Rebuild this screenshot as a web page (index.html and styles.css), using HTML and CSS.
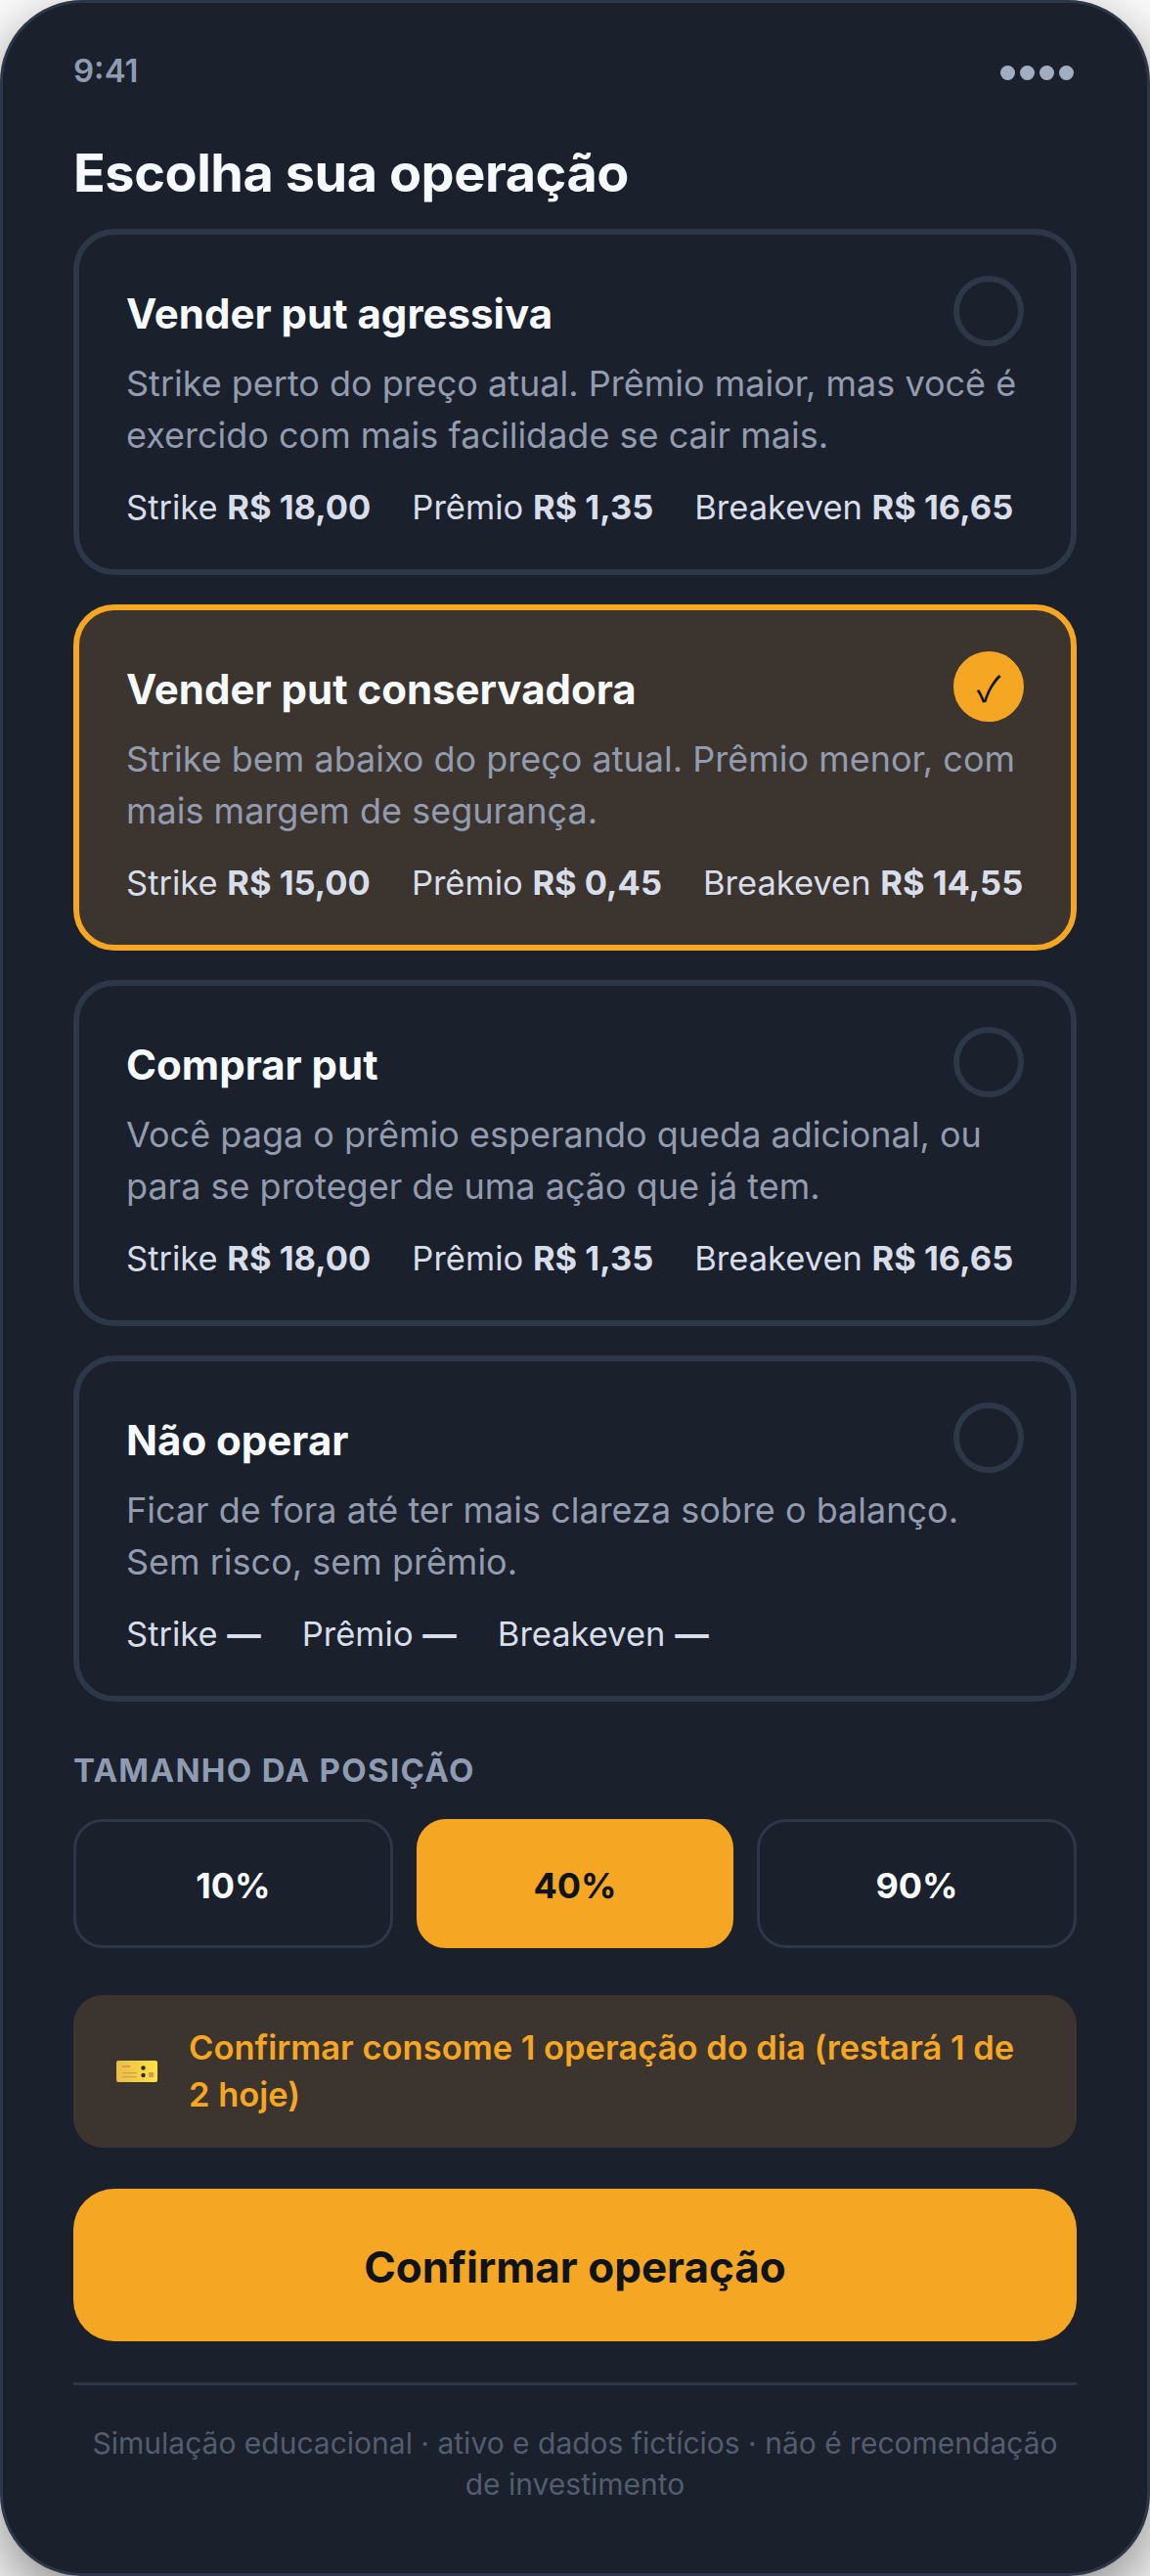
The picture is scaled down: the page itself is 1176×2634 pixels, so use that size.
FILE: index.html
```html
<!DOCTYPE html>
<html lang="pt-BR">
<head>
<meta charset="UTF-8">
<meta name="viewport" content="width=device-width, initial-scale=1.0">
<title>Escolha sua operação</title>
<link rel="stylesheet" href="styles.css">
</head>
<body>
<div class="phone">
    <div class="status-bar">
        <span class="time">9:41</span>
        <div class="dots"><i></i><i></i><i></i><i></i></div>
    </div>
    <h1>Escolha sua operação</h1>

    <div class="cards">
        <div class="card">
            <div class="card-head">
                <h2>Vender put agressiva</h2>
                <div class="radio"></div>
            </div>
            <p class="desc">Strike perto do preço atual. Prêmio maior, mas você é exercido com mais facilidade se cair mais.</p>
            <div class="stats">
                <span>Strike <b>R$ 18,00</b></span>
                <span>Prêmio <b>R$ 1,35</b></span>
                <span>Breakeven <b>R$ 16,65</b></span>
            </div>
        </div>
        <div class="card selected">
            <div class="card-head">
                <h2>Vender put conservadora</h2>
                <div class="radio">✓</div>
            </div>
            <p class="desc">Strike bem abaixo do preço atual. Prêmio menor, com mais margem de segurança.</p>
            <div class="stats">
                <span>Strike <b>R$ 15,00</b></span>
                <span>Prêmio <b>R$ 0,45</b></span>
                <span>Breakeven <b>R$ 14,55</b></span>
            </div>
        </div>
        <div class="card">
            <div class="card-head">
                <h2>Comprar put</h2>
                <div class="radio"></div>
            </div>
            <p class="desc">Você paga o prêmio esperando queda adicional, ou para se proteger de uma ação que já tem.</p>
            <div class="stats">
                <span>Strike <b>R$ 18,00</b></span>
                <span>Prêmio <b>R$ 1,35</b></span>
                <span>Breakeven <b>R$ 16,65</b></span>
            </div>
        </div>
        <div class="card">
            <div class="card-head">
                <h2>Não operar</h2>
                <div class="radio"></div>
            </div>
            <p class="desc">Ficar de fora até ter mais clareza sobre o balanço. Sem risco, sem prêmio.</p>
            <div class="stats">
                <span>Strike <b>—</b></span>
                <span>Prêmio <b>—</b></span>
                <span>Breakeven <b>—</b></span>
            </div>
        </div>
    </div>

    <div class="section-label">TAMANHO DA POSIÇÃO</div>
    <div class="sizes">
        <div class="size">10%</div>
        <div class="size active">40%</div>
        <div class="size">90%</div>
    </div>

    <div class="notice">
        <svg class="ticket" viewBox="0 0 42 22" width="42" height="22">
            <defs>
                <linearGradient id="ticket-fill" x1="0" y1="0" x2="1" y2="0">
                    <stop offset="0" stop-color="#e9bd45"/>
                    <stop offset="1" stop-color="#fde245"/>
                </linearGradient>
            </defs>
            <rect width="42" height="22" rx="2" fill="url(#ticket-fill)"/>
            <rect x="6" y="5" width="8" height="2" fill="#e0945a"/>
            <rect x="6" y="12" width="15" height="1.2" fill="#e0945a"/>
            <rect x="6" y="16" width="15" height="1.2" fill="#e0945a"/>
            <rect x="33" y="12" width="5" height="5" fill="#e0945a"/>
            <circle cx="27.5" cy="7.5" r="2.2" fill="#2a2a2a"/>
            <circle cx="27.5" cy="15" r="2.2" fill="#2a2a2a"/>
        </svg>
        <span>Confirmar consome 1 operação do dia (restará 1 de 2 hoje)</span>
    </div>

    <button class="confirm">Confirmar operação</button>

    <p class="footer">Simulação educacional · ativo e dados fictícios · não é recomendação de investimento</p>
</div>
</body>
</html>
```

FILE: styles.css
```css
* {
    box-sizing: border-box;
}
html, body {
    margin: 0;
    padding: 0;
}
body {
    width: 1176px;
    height: 2634px;
    background: #fff;
    font-family: Inter, "Liberation Sans", sans-serif;
    overflow: hidden;
}
.phone {
    width: 1176px;
    height: 2634px;
    padding: 0 72px;
    background-color: #1a202c;
    border: 3px solid #2d3748;
    border-radius: 84px;
    box-shadow: 0 24px 72px rgba(0,0,0,0.5);
    overflow: hidden;
}
.status-bar {
    display: flex;
    justify-content: space-between;
    align-items: center;
    height: 60px;
    margin-top: 39px;
}
.time {
    font-size: 33px;
    font-weight: 600;
    color: #8f9bb0;
}
.dots {
    display: flex;
    gap: 5px;
    margin-top: 4px;
    padding-right: 3px;
}
.dots i {
    width: 15px;
    height: 15px;
    border-radius: 50%;
    background-color: #a0aec0;
}
h1 {
    margin: 45px 0 0;
    font-size: 54px;
    line-height: 60px;
    letter-spacing: -0.45px;
    font-weight: 700;
    color: #f7fafc;
}
.cards {
    display: flex;
    flex-direction: column;
    gap: 30px;
    margin-top: 27px;
}
.card {
    height: 354px;
    padding: 42px 48px;
    border: 6px solid #2d3748;
    border-radius: 42px;
}
.card.selected {
    background-color: #3c342e;
    border-color: #f5a623;
}
.card-head {
    display: flex;
    justify-content: space-between;
    height: 72px;
}
h2 {
    margin: 14px 0 0;
    font-size: 42px;
    line-height: 50px;
    font-weight: 700;
    color: #f7fafc;
}
.radio {
    width: 72px;
    height: 72px;
    flex-shrink: 0;
    border: 6px solid #2d3748;
    border-radius: 50%;
    display: flex;
    align-items: center;
    justify-content: center;
}
.selected .radio {
    background-color: #f5a623;
    border-color: #f5a623;
    color: #0f141c;
    font-family: "Noto Sans CJK JP", sans-serif;
    font-size: 36px;
    font-weight: 400;
}
.desc {
    margin: 12px 0 0;
    font-size: 36px;
    line-height: 52.5px;
    color: #929cae;
}
.stats {
    display: flex;
    gap: 42px;
    margin-top: 22px;
    font-size: 34.5px;
    line-height: 52px;
    color: #d8dee9;
    white-space: nowrap;
}
.stats b {
    font-weight: 700;
}
.section-label {
    margin-top: 50px;
    font-size: 33px;
    line-height: 40px;
    font-weight: 700;
    letter-spacing: 1.32px;
    color: #8f9bb0;
}
.sizes {
    display: grid;
    grid-template-columns: 1fr 324px 1fr;
    gap: 24px;
    margin-top: 30px;
}
.size {
    display: flex;
    align-items: center;
    justify-content: center;
    height: 132px;
    padding-top: 3px;
    border: 3px solid #2d3748;
    border-radius: 30px;
    font-size: 36px;
    font-weight: 700;
    color: #f7fafc;
}
.size.active {
    background-color: #f5a623;
    border-color: #f5a623;
    color: #0f141c;
}
.notice {
    display: flex;
    align-items: center;
    gap: 32px;
    height: 156px;
    margin-top: 48px;
    padding: 0 48px 0 44px;
    background-color: #3c342e;
    border-radius: 30px;
    font-size: 34.5px;
    line-height: 48px;
    font-weight: 600;
    color: #f5a623;
}
.ticket {
    flex-shrink: 0;
}
.confirm {
    display: block;
    width: 100%;
    height: 156px;
    margin-top: 42px;
    padding: 3px 0 0;
    border: none;
    border-radius: 42px;
    background-color: #f5a623;
    color: #0f141c;
    font-family: Inter, "Liberation Sans", sans-serif;
    font-size: 44px;
    font-weight: 700;
}
.footer {
    margin: 42px 0 0;
    padding-top: 38px;
    border-top: 3px solid #2d3748;
    font-size: 30px;
    line-height: 42px;
    text-align: center;
    color: #535d6e;
}
```
